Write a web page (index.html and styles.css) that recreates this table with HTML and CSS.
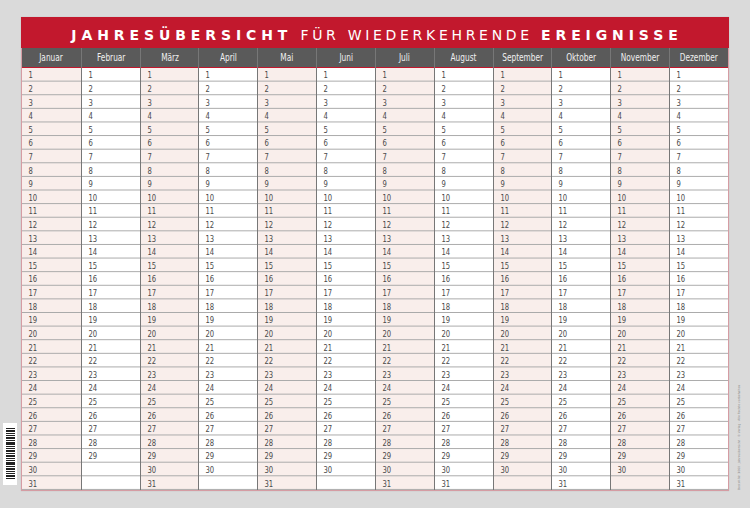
FILE: index.html
```html
<!DOCTYPE html>
<html lang="de">
<head>
<meta charset="utf-8">
<title>Jahresübersicht für wiederkehrende Ereignisse</title>
<link rel="stylesheet" href="styles.css">
</head>
<body>
<div class="barcode">
  <svg width="14" height="62" viewBox="0 0 14 62">
    <rect x="0" y="0" width="14" height="62" fill="#fff"/>
    <g fill="#222">
      <rect x="3" y="5" width="9" height="1"/><rect x="3" y="7" width="9" height="2"/><rect x="3" y="10" width="9" height="1"/>
      <rect x="3" y="12" width="9" height="1"/><rect x="3" y="14" width="9" height="2"/><rect x="3" y="17" width="9" height="1"/>
      <rect x="3" y="19" width="9" height="3"/><rect x="3" y="23" width="9" height="1"/><rect x="3" y="25" width="9" height="1"/>
      <rect x="3" y="27" width="9" height="2"/><rect x="3" y="30" width="9" height="1"/><rect x="3" y="32" width="9" height="2"/>
      <rect x="3" y="35" width="9" height="1"/><rect x="3" y="37" width="9" height="1"/><rect x="3" y="39" width="9" height="3"/>
      <rect x="3" y="43" width="9" height="1"/><rect x="3" y="45" width="9" height="2"/><rect x="3" y="48" width="9" height="1"/>
      <rect x="3" y="50" width="9" height="1"/><rect x="3" y="52" width="9" height="2"/><rect x="3" y="55" width="9" height="1"/>
    </g>
  </svg>
</div>
<div class="imprint">Bestell-Nr. 1060 · Jahresübersicht · © Verlag · Alle Rechte vorbehalten</div>

<div class="card">
  <div class="title"><b>JAHRESÜBERSICHT</b> FÜR WIEDERKEHRENDE <b>EREIGNISSE</b></div>
  <div class="grid">
    <div class="col tint"><div class="mh"><span>Januar</span></div><div class="days"><b>1</b><b>2</b><b>3</b><b>4</b><b>5</b><b>6</b><b>7</b><b>8</b><b>9</b><b>10</b><b>11</b><b>12</b><b>13</b><b>14</b><b>15</b><b>16</b><b>17</b><b>18</b><b>19</b><b>20</b><b>21</b><b>22</b><b>23</b><b>24</b><b>25</b><b>26</b><b>27</b><b>28</b><b>29</b><b>30</b><b>31</b></div></div>
    <div class="col"><div class="mh"><span>Februar</span></div><div class="days"><b>1</b><b>2</b><b>3</b><b>4</b><b>5</b><b>6</b><b>7</b><b>8</b><b>9</b><b>10</b><b>11</b><b>12</b><b>13</b><b>14</b><b>15</b><b>16</b><b>17</b><b>18</b><b>19</b><b>20</b><b>21</b><b>22</b><b>23</b><b>24</b><b>25</b><b>26</b><b>27</b><b>28</b><b>29</b><b></b><b></b></div></div>
    <div class="col tint"><div class="mh"><span>März</span></div><div class="days"><b>1</b><b>2</b><b>3</b><b>4</b><b>5</b><b>6</b><b>7</b><b>8</b><b>9</b><b>10</b><b>11</b><b>12</b><b>13</b><b>14</b><b>15</b><b>16</b><b>17</b><b>18</b><b>19</b><b>20</b><b>21</b><b>22</b><b>23</b><b>24</b><b>25</b><b>26</b><b>27</b><b>28</b><b>29</b><b>30</b><b>31</b></div></div>
    <div class="col"><div class="mh"><span>April</span></div><div class="days"><b>1</b><b>2</b><b>3</b><b>4</b><b>5</b><b>6</b><b>7</b><b>8</b><b>9</b><b>10</b><b>11</b><b>12</b><b>13</b><b>14</b><b>15</b><b>16</b><b>17</b><b>18</b><b>19</b><b>20</b><b>21</b><b>22</b><b>23</b><b>24</b><b>25</b><b>26</b><b>27</b><b>28</b><b>29</b><b>30</b><b></b></div></div>
    <div class="col tint"><div class="mh"><span>Mai</span></div><div class="days"><b>1</b><b>2</b><b>3</b><b>4</b><b>5</b><b>6</b><b>7</b><b>8</b><b>9</b><b>10</b><b>11</b><b>12</b><b>13</b><b>14</b><b>15</b><b>16</b><b>17</b><b>18</b><b>19</b><b>20</b><b>21</b><b>22</b><b>23</b><b>24</b><b>25</b><b>26</b><b>27</b><b>28</b><b>29</b><b>30</b><b>31</b></div></div>
    <div class="col"><div class="mh"><span>Juni</span></div><div class="days"><b>1</b><b>2</b><b>3</b><b>4</b><b>5</b><b>6</b><b>7</b><b>8</b><b>9</b><b>10</b><b>11</b><b>12</b><b>13</b><b>14</b><b>15</b><b>16</b><b>17</b><b>18</b><b>19</b><b>20</b><b>21</b><b>22</b><b>23</b><b>24</b><b>25</b><b>26</b><b>27</b><b>28</b><b>29</b><b>30</b><b></b></div></div>
    <div class="col tint"><div class="mh"><span>Juli</span></div><div class="days"><b>1</b><b>2</b><b>3</b><b>4</b><b>5</b><b>6</b><b>7</b><b>8</b><b>9</b><b>10</b><b>11</b><b>12</b><b>13</b><b>14</b><b>15</b><b>16</b><b>17</b><b>18</b><b>19</b><b>20</b><b>21</b><b>22</b><b>23</b><b>24</b><b>25</b><b>26</b><b>27</b><b>28</b><b>29</b><b>30</b><b>31</b></div></div>
    <div class="col"><div class="mh"><span>August</span></div><div class="days"><b>1</b><b>2</b><b>3</b><b>4</b><b>5</b><b>6</b><b>7</b><b>8</b><b>9</b><b>10</b><b>11</b><b>12</b><b>13</b><b>14</b><b>15</b><b>16</b><b>17</b><b>18</b><b>19</b><b>20</b><b>21</b><b>22</b><b>23</b><b>24</b><b>25</b><b>26</b><b>27</b><b>28</b><b>29</b><b>30</b><b>31</b></div></div>
    <div class="col tint"><div class="mh"><span>September</span></div><div class="days"><b>1</b><b>2</b><b>3</b><b>4</b><b>5</b><b>6</b><b>7</b><b>8</b><b>9</b><b>10</b><b>11</b><b>12</b><b>13</b><b>14</b><b>15</b><b>16</b><b>17</b><b>18</b><b>19</b><b>20</b><b>21</b><b>22</b><b>23</b><b>24</b><b>25</b><b>26</b><b>27</b><b>28</b><b>29</b><b>30</b><b></b></div></div>
    <div class="col"><div class="mh"><span>Oktober</span></div><div class="days"><b>1</b><b>2</b><b>3</b><b>4</b><b>5</b><b>6</b><b>7</b><b>8</b><b>9</b><b>10</b><b>11</b><b>12</b><b>13</b><b>14</b><b>15</b><b>16</b><b>17</b><b>18</b><b>19</b><b>20</b><b>21</b><b>22</b><b>23</b><b>24</b><b>25</b><b>26</b><b>27</b><b>28</b><b>29</b><b>30</b><b>31</b></div></div>
    <div class="col tint"><div class="mh"><span>November</span></div><div class="days"><b>1</b><b>2</b><b>3</b><b>4</b><b>5</b><b>6</b><b>7</b><b>8</b><b>9</b><b>10</b><b>11</b><b>12</b><b>13</b><b>14</b><b>15</b><b>16</b><b>17</b><b>18</b><b>19</b><b>20</b><b>21</b><b>22</b><b>23</b><b>24</b><b>25</b><b>26</b><b>27</b><b>28</b><b>29</b><b>30</b><b></b></div></div>
    <div class="col"><div class="mh"><span>Dezember</span></div><div class="days"><b>1</b><b>2</b><b>3</b><b>4</b><b>5</b><b>6</b><b>7</b><b>8</b><b>9</b><b>10</b><b>11</b><b>12</b><b>13</b><b>14</b><b>15</b><b>16</b><b>17</b><b>18</b><b>19</b><b>20</b><b>21</b><b>22</b><b>23</b><b>24</b><b>25</b><b>26</b><b>27</b><b>28</b><b>29</b><b>30</b><b>31</b></div></div>
  </div>
</div>
</body>
</html>
```
FILE: styles.css
```css
html, body {
  margin: 0;
  padding: 0;
}
body {
  background: #dadada;
  width: 750px;
  height: 508px;
  overflow: hidden;
  position: relative;
  font-family: "DejaVu Sans", sans-serif;
}
.card {
  width: 708px;
  margin: 17px 0 0 21px;
  background: #fff;
  box-shadow: 0 0 1px rgba(0,0,0,0.15);
}
.title {
  height: 31px;
  box-sizing: border-box;
  padding: 4px 0 0 4px;
  background: #c2182d;
  color: #fff;
  display: flex;
  align-items: center;
  justify-content: center;
  font-family: "DejaVu Sans", sans-serif;
  font-size: 14px;
  letter-spacing: 3.7px;
  white-space: pre;
}
.title b {
  font-weight: bold;
  letter-spacing: 4.9px;
}
.grid {
  display: grid;
  grid-template-columns: repeat(12, 1fr);
  border-left: 1px solid #d59ca3;
  border-right: 1px solid #d59ca3;
  border-bottom: 1px solid #d59ca3;
}
.col {
  display: flex;
  flex-direction: column;
  border-left: 1px solid #777;
}
.col:first-child {
  border-left: none;
}
.mh {
  height: 19px;
  background: #5a5a5a;
  color: #f0f0f0;
  font-family: "DejaVu Sans", sans-serif;
  font-size: 10px;
  line-height: 19px;
  text-align: center;
  border-bottom: 1px solid #c2182d;
  white-space: nowrap;
}
.mh span {
  display: inline-block;
  transform: scaleX(0.74);
}
.days {
  height: 422px;
  display: grid;
  grid-template-rows: repeat(31, 1fr);
  background-image: linear-gradient(to bottom, transparent calc(100% - 1px), #a9a9a9 calc(100% - 1px));
  background-size: 100% calc(422px / 31);
}
.tint .days {
  background-color: #f9eeeb;
}
.days b {
  font-weight: normal;
  font-family: "DejaVu Sans", sans-serif;
  font-size: 9.5px;
  color: #4a4a4a;
  padding-left: 9px;
  display: flex;
  align-items: center;
  min-height: 0;
  overflow: hidden;
  transform: scaleX(0.72);
  transform-origin: 0 50%;
}
.barcode {
  position: absolute;
  left: 3px;
  top: 423px;
  width: 14px;
  height: 62px;
}
.barcode svg {
  display: block;
}
.imprint {
  position: absolute;
  left: 737px;
  top: 490px;
  transform-origin: 0 0;
  transform: rotate(-90deg);
  font-family: "DejaVu Sans", sans-serif;
  font-size: 3px;
  color: #888;
  white-space: nowrap;
}
```
